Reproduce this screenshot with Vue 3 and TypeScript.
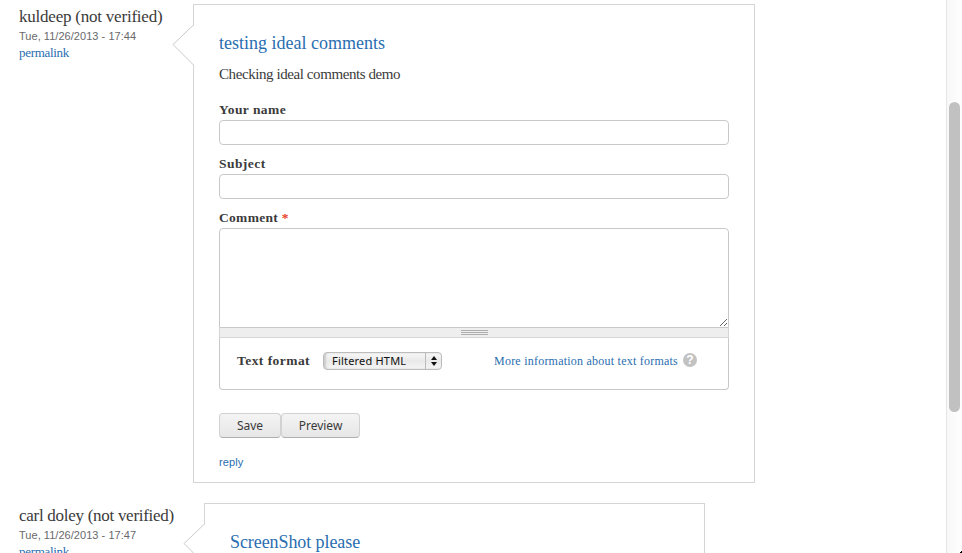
<script setup lang="ts">
import { ref } from 'vue'

interface Comment {
  author: string
  date: string
  title: string
  body?: string
  kind: string
  open: boolean
}

const comments: Comment[] = [
  { author: 'kuldeep (not verified)', date: 'Tue, 11/26/2013 - 17:44', title: 'testing ideal comments', body: 'Checking ideal comments demo', kind: 'first', open: true },
  { author: 'carl doley (not verified)', date: 'Tue, 11/26/2013 - 17:47', title: 'ScreenShot please', kind: 'second', open: false },
]
const name = ref('')
const subject = ref('')
const message = ref('')
</script>

<template>
  <div class="page">
    <main class="content">
      <article v-for="c in comments" :key="c.author" class="comment" :class="c.kind">
        <div class="attribution">
          <div class="author">{{ c.author }}</div>
          <div class="date">{{ c.date }}</div>
          <a class="permalink">permalink</a>
        </div>
        <div class="bubble">
          <svg class="pointer" width="23" height="42" viewBox="0 0 23 42">
            <path d="M22 0.5L1 20.5L22 41.5" fill="#fff" stroke="#c8cacb" />
            <path d="M22.5 1V41" stroke="#fff" />
          </svg>
          <h3>{{ c.title }}</h3>
          <template v-if="c.open">
            <p class="body">{{ c.body }}</p>
            <form @submit.prevent>
              <label class="l1" for="name">Your name</label>
              <input id="name" v-model="name" type="text" />
              <label class="l2" for="subject">Subject</label>
              <input id="subject" v-model="subject" type="text" />
              <label class="l3" for="message">Comment <b>*</b></label>
              <div class="area">
                <textarea id="message" v-model="message"></textarea>
                <svg class="resize" width="9" height="9" viewBox="0 0 9 9"><path d="M1 8L8 1M5 8L8 5" stroke="#555" stroke-width=".9" /></svg>
              </div>
              <div class="grippie"><i></i><i></i><i></i></div>
              <div class="format">
                <span class="flabel">Text format</span>
                <div class="select">
                  <span class="value">Filtered HTML</span>
                  <span class="arrows"><svg width="6" height="10" viewBox="0 0 6 10"><path d="M3 0L6 4H0ZM0 6H6L3 10Z" fill="#111" /></svg></span>
                </div>
                <a class="more">More information about text formats</a>
                <span class="help">?</span>
              </div>
              <div class="actions">
                <button class="save">Save</button>
                <button class="preview">Preview</button>
              </div>
            </form>
            <a class="reply">reply</a>
          </template>
        </div>
      </article>
    </main>
    <aside class="scrollbar"><div class="thumb"></div></aside>
    <svg class="cursor" width="2" height="2" viewBox="0 0 2 2"><path d="M1 0H2V2H0V1H1Z" fill="#000" /></svg>
  </div>
</template>

<style>
body { background: #fff; overflow: hidden; }
</style>
<style scoped>
* { box-sizing: border-box; }
.page { position: relative; display: flex; width: 962px; height: 553px; overflow: hidden; background: #fff; color: #3b3b3b; font-family: "Liberation Serif", serif; }
.content { width: 946px; padding: 4px 0 0 19px; display: flex; flex-direction: column; gap: 20px; }
.comment { display: flex; align-items: flex-start; flex: none; white-space: nowrap; }
.attribution { width: 174px; padding-top: 3px; }
.second .attribution { width: 185px; }
.author { font-size: 17px; line-height: 20px; letter-spacing: -.22px; }
.second .author { letter-spacing: -.28px; }
.date { margin-top: 1px; height: 16px; font: 11px/16px "Liberation Sans", sans-serif; letter-spacing: .04px; color: #68696b; }
.permalink { display: block; height: 18px; font-size: 13px; line-height: 18px; letter-spacing: -.3px; }
a, h3 { color: #2a6eb0; }
.bubble { position: relative; border: 1px solid #d3d5d6; padding: 27px 25px 0; width: 562px; height: 479px; }
.second .bubble { width: 501px; height: 120px; }
.pointer { position: absolute; left: -22px; top: 19px; display: block; }
h3 { margin: 0; font-size: 18px; line-height: 22px; height: 22px; font-weight: 400; }
.second h3 { letter-spacing: -.08px; }
.body { margin: 11px 0 0; font-size: 15px; line-height: 18px; height: 18px; letter-spacing: -.42px; }
form { margin: 0; }
label { display: block; height: 16px; margin-bottom: 2px; font-size: 13.5px; line-height: 16px; font-weight: 700; letter-spacing: .45px; }
.l1 { margin-top: 19px; }
.l2, .l3 { margin-top: 11px; }
.l3 { letter-spacing: .3px; }
label b { color: #e8401c; }
input { display: block; width: 510px; height: 25px; border: 1px solid #c9c9c9; border-radius: 4px; background: #fff; outline: 0; padding: 3px; }
.area { position: relative; height: 100px; }
textarea { display: block; width: 510px; height: 100px; border: 1px solid #c9c9c9; border-radius: 4px 4px 0 0; resize: none; outline: 0; padding: 4px; background: #fff; }
.resize { position: absolute; right: 1px; bottom: 1px; display: block; }
.grippie { height: 10px; border: 1px solid #d6d6d6; border-top: 0; background: #eee; display: flex; flex-direction: column; align-items: center; padding-top: 2px; gap: 1px; }
.grippie i { height: 1px; width: 27px; background: #aeaeae; }
.format { height: 52px; border: 1px solid #c9c9c9; border-top: 0; border-radius: 0 0 4px 4px; display: flex; align-items: flex-start; padding: 14px 0 0 17px; }
.flabel { width: 86px; font-size: 13.5px; font-weight: 700; line-height: 18px; letter-spacing: .45px; }
.select { width: 119px; height: 18px; border: 1px solid #bcbcbc; border-radius: 4px; display: flex; background: linear-gradient(#f8f8f8, #e9e9e9 50%, #f5f5f5); color: #111; box-shadow: inset 2px 0 2px #ccc; }
.value { width: 102px; padding-left: 8px; border-right: 1px solid #bbb; font: 11px/16px "Noto Sans", sans-serif; letter-spacing: .2px; }
.arrows { display: flex; align-items: center; justify-content: center; width: 15px; }
.more { width: 189px; margin-left: 52px; font-size: 12px; line-height: 18px; letter-spacing: .23px; }
.help { width: 14px; height: 14px; margin-top: 1px; border-radius: 50%; background: #c2c2c2; color: #fff; text-align: center; font: 700 12px/14px "Liberation Sans", sans-serif; }
.actions { display: flex; margin-top: 23px; }
button { height: 25px; padding: 0; border: 1px solid #d2d2d2; border-bottom-color: #afafaf; border-radius: 4px; background: linear-gradient(#f4f4f4, #e6e6e6); color: #3a3a3a; font: 12px/22px "Noto Sans", sans-serif; }
.save { width: 62px; }
.preview { width: 79px; }
.reply { display: block; margin-top: 15px; font: 11px/18px "Liberation Sans", sans-serif; letter-spacing: .1px; }
.scrollbar { width: 16px; height: 553px; border-left: 1px solid #e5e5e5; background: linear-gradient(90deg, #f8f8f8, #fefefe); padding: 102px 0 0 2px; }
.thumb { width: 11px; height: 310px; border-radius: 6px; background: #c1c1c1; }
.cursor { position: absolute; right: 0; bottom: 0; display: block; }
</style>
